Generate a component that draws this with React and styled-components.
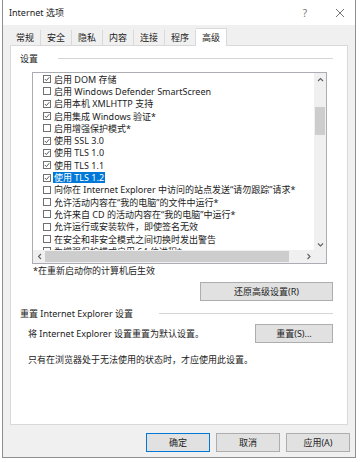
import React from 'react';
import styled, { createGlobalStyle } from 'styled-components';

const GlobalStyle = createGlobalStyle`
  html, body {
    margin: 0;
    padding: 0;
    background: #ffffff;
  }
  body {
    font-family: "Noto Sans", "Noto Sans CJK SC", sans-serif;
    font-size: 9px;
    color: #222;
  }
`;

const Window = styled.div`
  display: flex;
  flex-direction: column;
  box-sizing: border-box;
  margin-left: 2px;
  width: 354px;
  height: 458px;
  border: 1px solid #8f8f8f;
  border-top: none;
  background: #f0f0f0;
`;

const TitleBar = styled.div`
  display: flex;
  align-items: center;
  height: 25px;
  padding-left: 6px;
  background: #ffffff;
`;

const Title = styled.div`
  flex: 1;
  font-size: 9px;
`;

const TitleButton = styled.div`
  width: ${p => p.$w}px;
  height: 25px;
  display: flex;
  align-items: center;
  justify-content: center;
  color: #777;
  font-size: 10px;
`;

const TabRow = styled.div`
  display: flex;
  align-items: flex-end;
  height: 17px;
  margin-top: 3px;
  padding-left: 7px;
`;

const Tab = styled.div`
  box-sizing: border-box;
  height: ${p => (p.$active ? '18px' : '15px')};
  padding: 0 6px;
  display: flex;
  align-items: center;
  background: ${p => (p.$active ? '#ffffff' : '#f0f0f0')};
  border-right: 1px solid ${p => (p.$active ? '#d9d9d9' : '#d9d9d9')};
  border-top: ${p => (p.$active ? '1px solid #d9d9d9' : 'none')};
  margin-bottom: ${p => (p.$active ? '-1px' : '0')};
  position: relative;
  z-index: 1;
`;

const Panel = styled.div`
  box-sizing: border-box;
  height: 380px;
  margin: 0 7px 0 7px;
  border: 1px solid #d9d9d9;
  background: #ffffff;
  display: flex;
  flex-direction: column;
  padding: 6px 14px 0 9px;
`;

const GroupHeader = styled.div`
  display: flex;
  align-items: center;
  gap: ${p => p.$gap || 20}px;
  height: 12px;

  &::after {
    content: '';
    flex: ${p => (p.$line ? `0 0 ${p.$line}px` : '1')};
    margin-left: auto;
    border-top: 1px solid #d5d5d5;
  }
`;

const ListBox = styled.div`
  box-sizing: border-box;
  margin: 8px 6px 0 12px;
  height: 192px;
  border: 1px solid #abadb3;
  display: grid;
  grid-template-columns: 1fr 12px;
  grid-template-rows: 1fr 13px;
`;

const ListContent = styled.div`
  overflow: hidden;
  padding: 0 0 0 10px;
  white-space: nowrap;
`;

const Item = styled.div`
  display: flex;
  align-items: center;
  height: 12.3px;
  gap: 2px;
`;

const Box = styled.span`
  box-sizing: border-box;
  width: 8px;
  height: 8px;
  border: 1px solid #707070;
  display: inline-flex;
  align-items: center;
  justify-content: center;
  background: #fff;
  flex: none;
`;

const ItemText = styled.span`
  padding: 0 1px;
  line-height: 11px;
  background: ${p => (p.$selected ? '#0078d7' : 'transparent')};
  color: ${p => (p.$selected ? '#ffffff' : '#222')};
`;

const VScroll = styled.div`
  background: #f0f0f0;
  display: flex;
  flex-direction: column;
`;

const ScrollArrow = styled.div`
  height: ${p => p.$h || 12}px;
  width: 12px;
  flex: none;
  display: flex;
  align-items: center;
  justify-content: center;
`;

const VThumb = styled.div`
  margin: 22px 1px 0;
  height: 28px;
  background: #cdcdcd;
`;

const Spacer = styled.div`
  flex: 1;
`;

const HScroll = styled.div`
  background: #f0f0f0;
  display: flex;
  align-items: stretch;
`;

const HThumb = styled.div`
  width: 244px;
  background: #cdcdcd;
  margin: 1px 0;
`;

const Corner = styled.div`
  background: #f0f0f0;
`;

const Note = styled.div`
  margin: 1px 0 0 13px;
  height: 12px;
  line-height: 12px;
`;

const ButtonRow = styled.div`
  display: flex;
  justify-content: ${p => (p.$between ? 'space-between' : 'flex-end')};
  align-items: center;
  margin-top: ${p => p.$mt || 0}px;
  padding-left: ${p => p.$pl || 0}px;
`;

const Button = styled.button`
  box-sizing: border-box;
  width: ${p => p.$w || 64}px;
  height: 19px;
  padding: 0;
  font-family: inherit;
  font-size: 9px;
  color: #222;
  background: #e1e1e1;
  border: 1px solid ${p => (p.$focus ? '#0078d7' : '#adadad')};
`;

const Paragraph = styled.div`
  margin: ${p => p.$m || '0'};
  height: 12px;
  line-height: 12px;
`;

const Footer = styled.div`
  display: flex;
  justify-content: flex-end;
  gap: 6px;
  padding: 8px 5px 0 0;
`;

const items = [
  { on: true, text: '启用 DOM 存储' },
  { on: false, text: '启用 Windows Defender SmartScreen' },
  { on: true, text: '启用本机 XMLHTTP 支持' },
  { on: true, text: '启用集成 Windows 验证*' },
  { on: false, text: '启用增强保护模式*' },
  { on: true, text: '使用 SSL 3.0' },
  { on: true, text: '使用 TLS 1.0' },
  { on: true, text: '使用 TLS 1.1' },
  { on: true, text: '使用 TLS 1.2', selected: true },
  { on: false, text: '向你在 Internet Explorer 中访问的站点发送“请勿跟踪”请求*' },
  { on: false, text: '允许活动内容在“我的电脑”的文件中运行*' },
  { on: false, text: '允许来自 CD 的活动内容在“我的电脑”中运行*' },
  { on: false, text: '允许运行或安装软件，即使签名无效' },
  { on: false, text: '在安全和非安全模式之间切换时发出警告' },
  { on: false, text: '为增强保护模式启用 64 位进程*' },
];

const tabs = ['常规', '安全', '隐私', '内容', '连接', '程序', '高级'];

const Check = () => (
  <svg width="6" height="6" viewBox="0 0 6 6">
    <path d="M0.8 3 L2.4 4.6 L5.3 1.2" fill="none" stroke="#444" strokeWidth="0.9" />
  </svg>
);

const Chevron = ({ dir }) => {
  const d = {
    up: 'M2 6 L4.5 3.5 L7 6',
    down: 'M2 3.5 L4.5 6 L7 3.5',
    left: 'M6 2 L3.5 4.5 L6 7',
    right: 'M3.5 2 L6 4.5 L3.5 7',
  }[dir];
  return (
    <svg width="9" height="9" viewBox="0 0 9 9">
      <path d={d} fill="none" stroke="#606060" strokeWidth="1.1" />
    </svg>
  );
};

export default function App() {
  return (
    <>
      <GlobalStyle />
      <Window>
        <TitleBar>
          <Title>Internet 选项</Title>
          <TitleButton $w={40}>?</TitleButton>
          <TitleButton $w={30}>
            <svg width="10" height="10" viewBox="0 0 10 10">
              <path d="M1 1 L9 9 M9 1 L1 9" stroke="#666" strokeWidth="0.9" />
            </svg>
          </TitleButton>
        </TitleBar>

        <TabRow>
          {tabs.map(t => (
            <Tab key={t} $active={t === '高级'}>{t}</Tab>
          ))}
        </TabRow>

        <Panel>
          <GroupHeader>设置</GroupHeader>
          <ListBox>
            <ListContent>
              {items.map(it => (
                <Item key={it.text}>
                  <Box>{it.on && <Check />}</Box>
                  <ItemText $selected={it.selected}>{it.text}</ItemText>
                </Item>
              ))}
            </ListContent>
            <VScroll>
              <ScrollArrow><Chevron dir="up" /></ScrollArrow>
              <VThumb />
              <Spacer />
              <ScrollArrow><Chevron dir="down" /></ScrollArrow>
            </VScroll>
            <HScroll>
              <ScrollArrow $h={13}><Chevron dir="left" /></ScrollArrow>
              <HThumb />
              <Spacer />
              <ScrollArrow $h={13}><Chevron dir="right" /></ScrollArrow>
            </HScroll>
            <Corner />
          </ListBox>
          <Note>*在重新启动你的计算机后生效</Note>
          <ButtonRow $mt={5}>
            <Button $w={133}>还原高级设置(R)</Button>
          </ButtonRow>
          <GroupHeader $line={174} style={{ marginTop: 6 }}>重置 Internet Explorer 设置</GroupHeader>
          <ButtonRow $between $pl={8} $mt={5}>
            <span>将 Internet Explorer 设置重置为默认设置。</span>
            <Button $w={78}>重置(S)...</Button>
          </ButtonRow>
          <Paragraph $m="11px 0 0 8px">只有在浏览器处于无法使用的状态时，才应使用此设置。</Paragraph>
        </Panel>

        <Footer>
          <Button $focus>确定</Button>
          <Button>取消</Button>
          <Button>应用(A)</Button>
        </Footer>
      </Window>
    </>
  );
}
